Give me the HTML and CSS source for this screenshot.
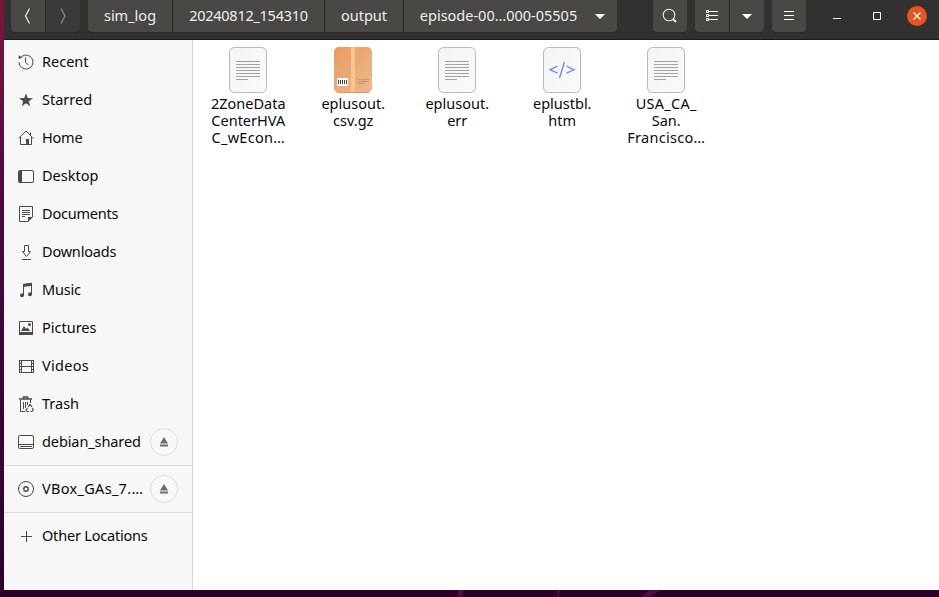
FILE: index.html
```html
<!DOCTYPE html>
<html lang="en">
<head>
<meta charset="utf-8">
<title>Files</title>
<link rel="stylesheet" href="styles.css">
</head>
<body>
<svg width="0" height="0" class="defs" aria-hidden="true">
  <defs>
    <linearGradient id="paper" x1="0" y1="0" x2="1" y2="1"><stop offset="0" stop-color="#f4f4f4"/><stop offset="1" stop-color="#fafafa"/></linearGradient>
    <linearGradient id="box" x1="0" y1="0" x2="1" y2="1"><stop offset="0" stop-color="#e99b60"/><stop offset="1" stop-color="#efb88f"/></linearGradient>
    <symbol id="eject" viewBox="0 0 10 10"><path d="M5 0 9 6.500H1zM1 7.500h8v2H1z" fill="#6c6c6c"/></symbol>
    <symbol id="doc" viewBox="0 0 40 48">
      <rect x="1.5" y="1.5" width="37" height="45" rx="5" fill="url(#paper)" stroke="#b9b9b9"/>
      <path d="M8 15.500h24M8 18.500h24M8 21.500h24M8 24.500h24M8 27.500h24M8 30.500h24M8 33.500h12" stroke="#a2a2a2"/>
    </symbol>
  </defs>
</svg>
<div class="window">
  <header class="bar">
    <div class="group nav">
      <button class="btn"><svg width="34" height="32"><path d="M18.500 8.500 14.500 16l4 7.500" fill="none" stroke="#eee" stroke-width="1.200"/></svg></button>
      <button class="btn off"><svg width="34" height="32"><path d="M15 8.500 19 16l-4 7.500" fill="none" stroke="#8c8c8b" stroke-width="1.200"/></svg></button>
    </div>
    <nav class="group path">
      <button class="btn p1"><span>sim_log</span></button>
      <button class="btn p2"><span>20240812_154310</span></button>
      <button class="btn p3"><span>output</span></button>
      <button class="btn p4"><span>episode-00…000-05505</span><svg width="10" height="5"><path d="M0 0h10L5 5z" fill="#fff"/></svg></button>
    </nav>
    <div class="group search"><button class="btn"><svg width="34" height="32"><circle cx="16" cy="15" r="5.800" fill="none" stroke="#eee" stroke-width="1.100"/><path d="m20 19 3 3" stroke="#eee" stroke-width="2"/></svg></button></div>
    <div class="group view">
      <button class="btn"><svg width="34" height="32"><path d="M14 11.500h9M14 15.500h9M14 19.500h9M11.500 10.500h2v2h-2zM11.500 14.500h2v2h-2zM11.500 18.500h2v2h-2z" fill="none" stroke="#fff"/></svg></button>
      <button class="btn"><svg width="34" height="32"><path d="M12 14h10l-5 5z" fill="#fff"/></svg></button>
    </div>
    <div class="group"><button class="btn"><svg width="34" height="32"><path d="M12 11.500h10M12 15.500h10M12 19.500h10" stroke="#fff"/></svg></button></div>
    <div class="controls">
      <svg width="8" height="20"><path d="M0 12.500h8" stroke="#fff"/></svg>
      <svg width="8" height="20"><path d="M.5 6.500h7v7h-7z" fill="none" stroke="#fff"/></svg>
      <svg width="20" height="20"><circle cx="10" cy="10" r="10" fill="#e95420"/><path d="m6.500 6.500 7 7m0-7-7 7" stroke="#fff" stroke-width="1.300"/></svg>
    </div>
  </header>
  <div class="body">
    <aside class="side">
      <div class="row"><svg class="ic" viewBox="0 0 16 16"><path d="M3.500 2.700A7 7 0 1 1 1 8" fill="none" stroke="#4a4a4a"/><path d="M.6 1.200 4.500 3.500.6 5z" fill="#4a4a4a"/><path d="M7.500 3.500V8.500l3 2.500" fill="none" stroke="#4a4a4a"/></svg><span>Recent</span></div>
      <div class="row"><svg class="ic" viewBox="0 0 16 16"><path d="m8 1.200 1.700 4.900 5.300.1-4.200 3.100 1.500 5L8 11.300l-4.300 3 1.500-5L1 6.200l5.300-.1z" fill="#4a4a4a"/></svg><span>Starred</span></div>
      <div class="row"><svg class="ic" viewBox="0 0 16 16"><path d="M.5 8.500 8 1l7.500 7.500M2.500 7v7.500h11V7M12.500 5V2.500" fill="none" stroke="#4a4a4a"/><path d="M8 9h3v5.500H8z" fill="#4a4a4a"/></svg><span class="tight">Home</span></div>
      <div class="row"><svg class="ic" viewBox="0 0 16 16"><rect x=".5" y="2.500" width="15" height="12" rx="1.500" fill="none" stroke="#4a4a4a"/><path d="M1 3h3v11H1z" fill="#4a4a4a"/></svg><span>Desktop</span></div>
      <div class="row"><svg class="ic" viewBox="0 0 16 16"><path d="M10 15.500H1.500V.5h13V11" fill="none" stroke="#4a4a4a"/><path d="M4 4.500h8M4 6.500h8M4 8.500h8M4 10.500h3" stroke="#4a4a4a"/><path d="M10 11h5l-5 5z" fill="#4a4a4a"/></svg><span class="tight">Documents</span></div>
      <div class="row"><svg class="ic" viewBox="0 0 16 16"><path d="M6.500 1.500h4v6h2l-4 5-4-5h2zM4 15.500h9" fill="none" stroke="#4a4a4a"/></svg><span class="tight">Downloads</span></div>
      <div class="row"><svg class="ic" viewBox="0 0 16 16"><path d="M5.500 13V2.500l8-1V12" fill="none" stroke="#4a4a4a"/><path d="M5 2 14 .7v3L5 5z" fill="#4a4a4a"/><circle cx="4" cy="13.300" r="2" fill="#4a4a4a"/><circle cx="12" cy="12.300" r="2" fill="#4a4a4a"/></svg><span class="tight">Music</span></div>
      <div class="row"><svg class="ic" viewBox="0 0 16 16"><path d="M1.500 1.500h13v13h-13z" fill="none" stroke="#4a4a4a"/><path d="M1 12h14v3H1zM3 11l3-5 2 3 1.500-1.500L12 11z" fill="#4a4a4a"/><circle cx="11.500" cy="4.500" r="1.500" fill="#4a4a4a"/></svg><span>Pictures</span></div>
      <div class="row"><svg class="ic" viewBox="0 0 16 16"><path d="M1.500 2v13M3.500 2v13M13.500 2v13M15.500 2v13M4 2.500h9M4 8.500h9M4 14.500h9M1 2.500h3M1 5.500h3M1 8.500h3M1 11.500h3M1 14.500h3M13 2.500h3M13 5.500h3M13 8.500h3M13 11.500h3M13 14.500h3" stroke="#4a4a4a"/></svg><span class="loose">Videos</span></div>
      <div class="row"><svg class="ic" viewBox="0 0 16 16"><path d="M1 3h13M5.500 2.500V1h4v1.500" fill="none" stroke="#4a4a4a" stroke-width="1.500"/><path d="M2.500 4v11.500H7M5.500 6v7M7.500 6v6M9.500 6v3M12.500 4v3" fill="none" stroke="#4a4a4a"/><path d="m10 11 2-2.500 2 2.500M9.500 12 8 14l1 1.500h2M12.500 15.500H14l1.300-2-1-1.500" fill="none" stroke="#4a4a4a" stroke-width="1.200"/></svg><span>Trash</span></div>
      <div class="row"><svg class="ic" viewBox="0 0 16 16"><rect x=".5" y="1.500" width="15" height="13" rx="1.500" fill="none" stroke="#4a4a4a"/><path d="M1 10.500h14M2 12.500h12" stroke="#4a4a4a"/></svg><span class="snug">debian_shared</span><button class="eject"><svg width="10" height="10"><use href="#eject"/></svg></button></div>
      <hr>
      <div class="row"><svg class="ic" viewBox="0 0 16 16"><circle cx="8" cy="8" r="7.500" fill="none" stroke="#4a4a4a"/><circle cx="8" cy="8" r="2.200" fill="none" stroke="#4a4a4a" stroke-width="1.400"/></svg><span class="loose">VBox_GAs_7.…</span><button class="eject"><svg width="10" height="10"><use href="#eject"/></svg></button></div>
      <hr>
      <div class="row"><svg class="ic" viewBox="0 0 16 16"><path d="M3 8.500h11M8.500 3v11" stroke="#4a4a4a"/></svg><span class="tight">Other Locations</span></div>
    </aside>
    <main class="files">
      <div class="file"><svg width="40" height="48"><use href="#doc"/></svg><p>2ZoneData<br>CenterHVA<br><span class="loose">C_wEcon…</span></p></div>
      <div class="file"><svg width="40" height="48"><rect x="1" y="1" width="38" height="46" rx="5" fill="url(#box)"/><path d="M18 1h4v46h-4z" fill="#f3c88f"/><path d="M4 32h11v8H4z" fill="#fff"/><path d="M5.500 34v4M7.500 34v4M9.500 34v4M11.500 34v4M13.500 34v4" stroke="#444"/><path d="M25 33.500h11M25 35.500h11M25 37.500h7" stroke="#d98e5d"/><path d="M4 46.500h32" stroke="#d79a70"/></svg><p class="nudge">eplusout.<br>csv.gz</p></div>
      <div class="file"><svg width="40" height="48"><use href="#doc"/></svg><p>eplusout.<br>err</p></div>
      <div class="file"><svg width="40" height="48"><rect x="1.500" y="1.500" width="37" height="45" rx="5" fill="url(#paper)" stroke="#b9b9b9"/><path d="m15.500 20-7.500 3.800 7.500 3.400M24.500 20l7.500 3.800-7.500 3.400M22.500 16l-5 16" fill="none" stroke="#6590f2" stroke-width="1.400"/></svg><p class="nudge">eplustbl.<br>htm</p></div>
      <div class="file"><svg width="40" height="48"><use href="#doc"/></svg><p><span class="loose">USA_CA_</span><br>San.<br><span class="loose">Francisco…</span></p></div>
    </main>
  </div>
</div>
<footer class="desk"><svg width="939" height="7"><path d="M458 0h5v7h-5zM558 0h2l-1 7h-2zM649 0h11l-10 7h-9z" fill="#4d0b4c"/></svg></footer>
</body>
</html>
```

FILE: styles.css
```css
* { box-sizing: border-box; }
body {
  margin: 0;
  width: 939px;
  height: 597px;
  overflow: hidden;
  font: 14.5px/17px "Noto Sans", sans-serif;
  color: #0a0a0a;
  background: linear-gradient(#7b173f 0, #6b123d 80px, #510945 170px, #3e0640 320px, #2c0029 590px);
}
.defs { position: absolute; }
svg { display: block; flex: none; }
.window { margin-left: 4px; height: 590px; display: flex; flex-direction: column; background: #fff; }
.bar {
  height: 40px;
  flex: none;
  display: flex;
  align-items: flex-start;
  padding-left: 7px;
  background: #333031;
  border-bottom: 1px solid #1c1a1b;
}
.group { display: flex; gap: 1px; height: 32px; margin-right: 8px; border-radius: 0 0 4px 4px; overflow: hidden; background: #2a2828; box-shadow: 0 1px #292727; }
.path { margin-right: 36px; }
.btn { border: 0; padding: 0 0 1px; margin: 0; height: 32px; display: flex; align-items: center; justify-content: center; font: inherit; color: #eee; background: #494845; white-space: nowrap; }
.btn > svg[height="32"] { margin-bottom: -1px; }
.off { background: #3b3a39; }
.p1 { width: 84px; }
.p2 { width: 151px; letter-spacing: -0.27px; }
.p3 { width: 78px; }
.p4 { width: 213px; gap: 18px; padding-left: 4px; }
.p4 svg { margin-top: 1px; }
.controls { display: flex; gap: 32px; margin: 6px 0 0 19px; }
.controls svg:last-child { margin-left: -6px; }
.body { flex: 1; display: flex; min-height: 0; }
.side { width: 189px; padding-top: 3px; background: #f7f7f7; border-right: 1px solid #d6d6d6; }
.row { height: 38px; display: flex; align-items: center; padding: 0 14px; white-space: nowrap; }
.row span { margin: -2px 0 0 8px; }
.tight { letter-spacing: -0.2px; }
.snug { letter-spacing: -0.1px; }
.loose { letter-spacing: 0.3px; }
.ic { width: 16px; height: 16px; }
.eject { width: 28px; height: 28px; margin-left: auto; padding: 0; border: 1px solid #dcdcdc; border-radius: 50%; background: #f8f8f8; display: flex; align-items: center; justify-content: center; }
hr { height: 1px; margin: 4px 0; border: 0; background: #dadada; }
.files { display: flex; align-items: flex-start; padding: 6px 0 0 3px; }
.file { width: 104.5px; display: flex; flex-direction: column; align-items: center; text-align: center; white-space: nowrap; }
.file p { margin: 1px 0 0; }
.file .nudge { padding-left: 1px; }
.desk { height: 7px; background: #2c0029; }
```
